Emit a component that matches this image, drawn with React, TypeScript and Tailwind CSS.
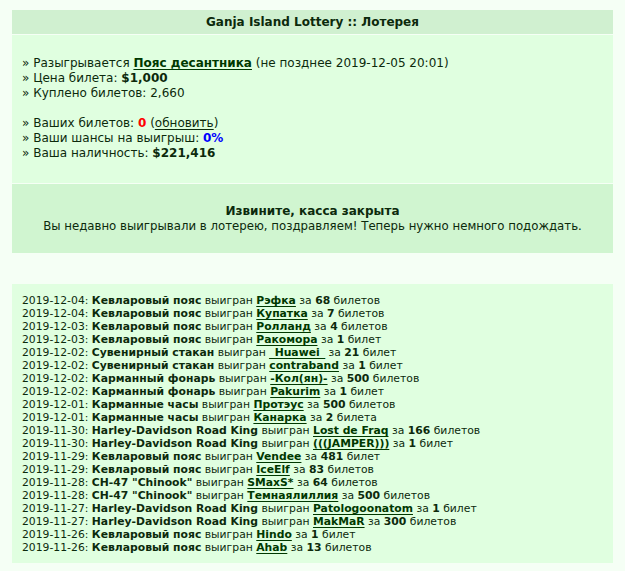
const wins = [
  { date: "2019-12-04", item: "Кевларовый пояс", who: "Рэфка", n: 68, word: "билетов" },
  { date: "2019-12-04", item: "Кевларовый пояс", who: "Купатка", n: 7, word: "билетов" },
  { date: "2019-12-03", item: "Кевларовый пояс", who: "Ролланд", n: 4, word: "билетов" },
  { date: "2019-12-03", item: "Кевларовый пояс", who: "Ракомора", n: 1, word: "билет" },
  { date: "2019-12-02", item: "Сувенирный стакан", who: "_Huawei_", n: 21, word: "билет" },
  { date: "2019-12-02", item: "Сувенирный стакан", who: "contraband", n: 1, word: "билет" },
  { date: "2019-12-02", item: "Карманный фонарь", who: "-Кол(ян)-", n: 500, word: "билетов" },
  { date: "2019-12-02", item: "Карманный фонарь", who: "Pakurim", n: 1, word: "билет" },
  { date: "2019-12-01", item: "Карманные часы", who: "Протэус", n: 500, word: "билетов" },
  { date: "2019-12-01", item: "Карманные часы", who: "Канарка", n: 2, word: "билета" },
  { date: "2019-11-30", item: "Harley-Davidson Road King", who: "Lost de Fraq", n: 166, word: "билетов" },
  { date: "2019-11-30", item: "Harley-Davidson Road King", who: "(((JAMPER)))", n: 1, word: "билет" },
  { date: "2019-11-29", item: "Кевларовый пояс", who: "Vendee", n: 481, word: "билет" },
  { date: "2019-11-29", item: "Кевларовый пояс", who: "IceElf", n: 83, word: "билетов" },
  { date: "2019-11-28", item: 'CH-47 "Chinook"', who: "SMaxS*", n: 64, word: "билетов" },
  { date: "2019-11-28", item: 'CH-47 "Chinook"', who: "Темнаялиллия", n: 500, word: "билетов" },
  { date: "2019-11-27", item: "Harley-Davidson Road King", who: "Patologoonatom", n: 1, word: "билет" },
  { date: "2019-11-27", item: "Harley-Davidson Road King", who: "MakMaR", n: 300, word: "билетов" },
  { date: "2019-11-26", item: "Кевларовый пояс", who: "Hindo", n: 1, word: "билет" },
  { date: "2019-11-26", item: "Кевларовый пояс", who: "Ahab", n: 13, word: "билетов" },
];

function Nick({ children }: { children: React.ReactNode }) {
  return (
    <a href="#" className="font-bold text-[#003800] underline underline-offset-2">
      {children}
    </a>
  );
}

export default function App() {
  return (
    <div
      className="min-h-[571px] bg-[#f5fff5] pt-[10px] text-[#0c2a0c]"
      style={{ fontFamily: '"DejaVu Sans", Verdana, sans-serif' }}
    >
      <div className="mx-[12px] flex flex-col gap-px">
        <div className="flex h-[24px] items-center justify-center bg-[#d0f0d0] text-[12px] font-bold">
          Ganja Island Lottery :: Лотерея
        </div>

        <div className="bg-[#e0ffe0] px-[10px] pt-[21px] pb-[22px] text-[12px] leading-[15px]">
          <div>
            » Разыгрывается <Nick>Пояс десантника</Nick> (не позднее 2019-12-05 20:01)
          </div>
          <div>
            » Цена билета: <b>$1,000</b>
          </div>
          <div>» Куплено билетов: 2,660</div>
          <div className="h-[15px]" />
          <div>
            » Ваших билетов: <b className="text-[#ff0000]">0</b> (
            <a href="#" className="underline underline-offset-2">обновить</a>)
          </div>
          <div>
            » Ваши шансы на выигрыш: <b className="text-[#0000ff]">0%</b>
          </div>
          <div>
            » Ваша наличность: <b>$221,416</b>
          </div>
        </div>

        <div className="flex h-[69px] flex-col items-center justify-center bg-[#d0f5d0] text-[11.75px] leading-[15px]">
          <b className="text-[12px]">Извините, касса закрыта</b>
          <div>Вы недавно выигрывали в лотерею, поздравляем! Теперь нужно немного подождать.</div>
        </div>
      </div>

      <div className="mx-[12px] mt-[31px] bg-[#e0ffe0] px-[10px] pt-[10px] pb-[9px] text-[10.8px] leading-[13px]">
        {wins.map((w, i) => (
          <div key={i} className="whitespace-nowrap">
            {w.date}: <b>{w.item}</b> выигран <Nick>{w.who}</Nick> за <b>{w.n}</b> {w.word}
          </div>
        ))}
      </div>
    </div>
  );
}
